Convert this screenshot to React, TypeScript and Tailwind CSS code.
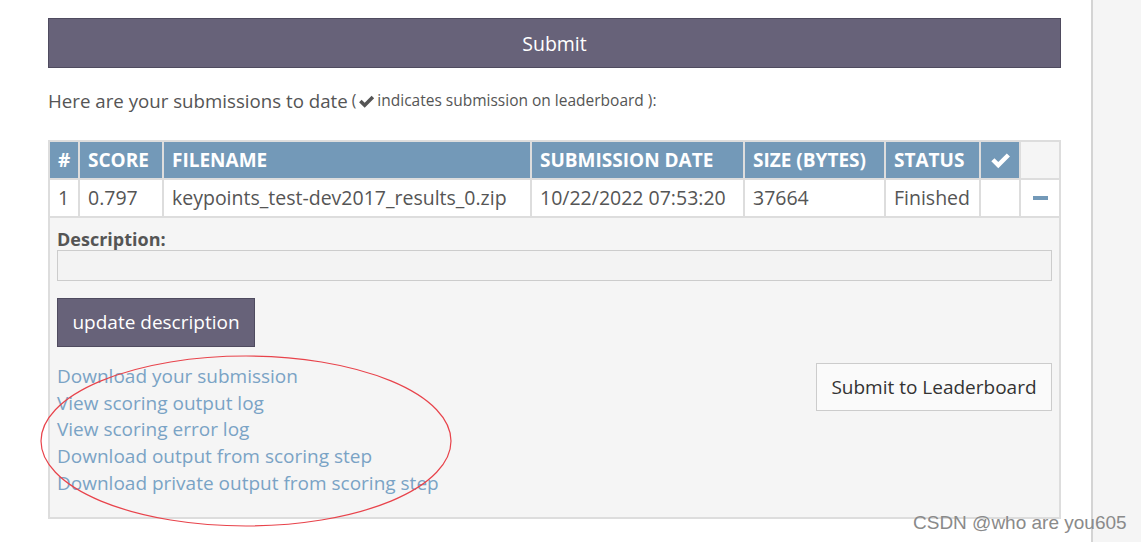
import React from "react";

const font = { fontFamily: '"Open Sans", "Noto Sans", sans-serif' };

const columns = [
  { label: "#", value: "1" },
  { label: "SCORE", value: "0.797" },
  { label: "FILENAME", value: "keypoints_test-dev2017_results_0.zip" },
  { label: "SUBMISSION DATE", value: "10/22/2022 07:53:20" },
  { label: "SIZE (BYTES)", value: "37664" },
  { label: "STATUS", value: "Finished" },
];

const links = [
  "Download your submission",
  "View scoring output log",
  "View scoring error log",
  "Download output from scoring step",
  "Download private output from scoring step",
];

const Check = ({ className }: { className?: string }) => (
  <svg viewBox="0 0 16 16" className={className} fill="currentColor">
    <path d="M1 8.6 3.4 6.3 6.3 9.1 12.8 2.6 15.2 5 6.3 13.9Z" />
  </svg>
);

const App: React.FC = () => {
  return (
    <div className="relative flex h-[542px] w-[1141px] overflow-hidden bg-white text-[#555]" style={font}>
      {/* Main column */}
      <div className="w-[1091px] pl-[48px] pt-[18px]">
        <button className="h-[50px] w-[1013px] border border-[#4f4b5f] bg-[#676279] pt-[1px] text-[19.5px] text-white">
          Submit
        </button>

        <p className="mt-[20px] flex h-[26px] items-center text-[18.7px]">
          Here are your submissions to date
          <span className="ml-[4px] flex items-center text-[15.5px]">
            (
            <Check className="mx-[2px] h-[17px] w-[17px] text-[#555]" />
            indicates submission on leaderboard&nbsp;):
          </span>
        </p>

        <div className="mt-[26px] w-[1013px] border-2 border-[#ddd]">
          <div className="grid grid-cols-[28px_82px_366px_211px_139px_93px_38px_38px] gap-[2px] bg-[#ddd]">
            {columns.map((c) => (
              <div
                key={c.label}
                className="flex h-[36px] items-center whitespace-nowrap bg-[#7399b8] px-[8px] text-[19px] font-bold text-white"
              >
                {c.label}
              </div>
            ))}
            <div className="flex h-[36px] items-center justify-center bg-[#7399b8]">
              <Check className="h-[21px] w-[21px] text-white" />
            </div>
            <div className="h-[36px] bg-[#f5f5f5]" />

            {columns.map((c) => (
              <div key={c.label} className="flex h-[36px] items-center whitespace-nowrap bg-white px-[8px] text-[19.5px]">
                {c.value}
              </div>
            ))}
            <div className="h-[36px] bg-white" />
            <div className="flex h-[36px] items-center justify-center bg-white">
              <div className="h-[4px] w-[15px] bg-[#7399b8]" />
            </div>
          </div>

          {/* Details panel */}
          <div className="border-t-2 border-[#ddd] bg-[#f5f5f5] px-[7px] pb-[21px] pt-[10px]">
            <label className="block h-[22px] text-[18px] font-bold leading-[22px] text-[#555]">Description:</label>
            <input className="block h-[31px] w-full border border-[#ccc] bg-[#f3f3f3]" />
            <button className="mt-[17px] h-[49px] w-[198px] border border-[#4f4b5f] bg-[#676279] text-[19px] text-white">
              update description
            </button>

            <div className="mt-[16px] flex items-start justify-between">
              <div className="flex flex-col">
                {links.map((l) => (
                  <a key={l} className="h-[26.7px] text-[19px] leading-[26.7px] text-[#7aa3c5]">
                    {l}
                  </a>
                ))}
              </div>
              <button className="h-[48px] w-[236px] border border-[#ccc] bg-[#fafafa] text-[19px] text-[#333]">
                Submit to Leaderboard
              </button>
            </div>
          </div>
        </div>
      </div>

      {/* Right strip */}
      <div className="w-[50px] border-l-2 border-[#d4d4d4] bg-[#f5f5f5]" />

      {/* Annotation ellipse */}
      <svg className="pointer-events-none absolute left-0 top-0" width="1141" height="542">
        <ellipse cx="246" cy="441" rx="205" ry="85" fill="none" stroke="#e8434b" strokeWidth="1.2" />
      </svg>

      <span
        className="absolute left-[913px] top-[509px] text-[19px] text-[#8a8a8a]"
        style={{ fontFamily: '"Liberation Sans", Arial, sans-serif' }}
      >
        CSDN @who are you605
      </span>
    </div>
  );
};

export default App;
